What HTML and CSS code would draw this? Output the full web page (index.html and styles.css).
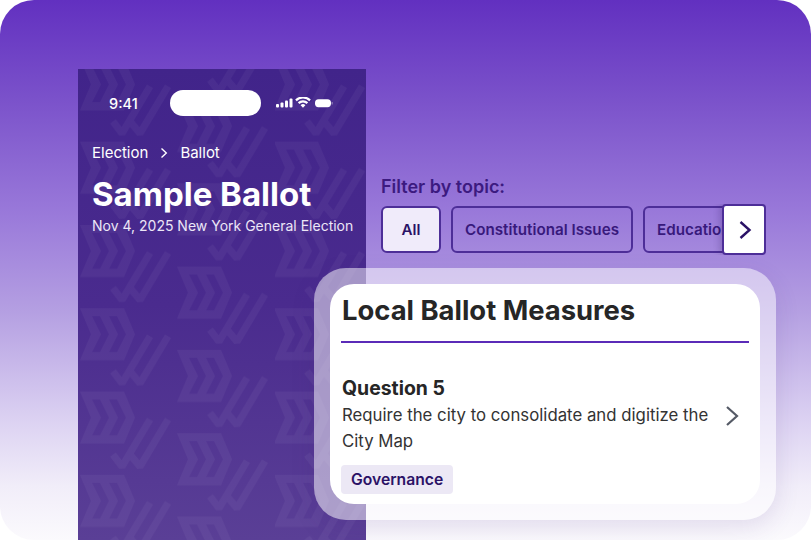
FILE: index.html
```html
<!DOCTYPE html>
<html lang="en">

<head>
    <meta charset="UTF-8">
    <meta name="viewport" content="width=device-width, initial-scale=1.0">
    <title>Sample Ballot</title>
    <link rel="stylesheet" href="styles.css">
</head>

<body>
    <div class="stage">
        <div class="phone">
            <svg class="pattern" width="288" height="471">
                <defs>
                    <g id="mark" class="mark">
                        <path fill-rule="evenodd" d="M0 0H44L55 26L44 52H0L11 26ZM12 8L21 26L12 44H20L29 26L20 8ZM29 8L38 26L29 44H37L46 26L37 8Z" />
                        <path class="mark-w" d="M33 63L42 75L70 28M50 63L60 75L88 28" />
                    </g>
                    <pattern id="tile" width="194" height="83.3" patternUnits="userSpaceOnUse" x="2" y="31">
                        <use href="#mark" x="97" y="0" />
                        <use href="#mark" x="0" y="41.65" />
                        <use href="#mark" x="0" y="-41.65" />
                    </pattern>
                </defs>
                <rect width="288" height="471" fill="url(#tile)" />
            </svg>
            <div class="status">
                <span class="time">9:41</span>
                <span class="island"></span>
                <svg class="status-icons" width="58" height="12" viewBox="0 0 58 12">
                    <rect x="0" y="7" width="3" height="3.5" rx="1" />
                    <rect x="4.5" y="5.5" width="3" height="5" rx="1" />
                    <rect x="9" y="3.5" width="3" height="7" rx="1" />
                    <rect x="13.5" y="1.5" width="3" height="9" rx="1" />
                    <path d="M27 10.8L24.6 8.2A3.4 3.4 0 0 1 29.4 8.2ZM23.4 7L21.8 5.3A7.4 7.4 0 0 1 32.2 5.3L30.6 7A5 5 0 0 0 23.4 7ZM20.7 4.2L19.2 2.6A11 11 0 0 1 34.8 2.6L33.3 4.2A8.9 8.9 0 0 0 20.7 4.2Z" />
                    <rect x="39" y="2.2" width="16" height="8" rx="3.6" />
                    <rect x="55.6" y="5" width="1" height="2.4" rx="0.5" opacity="0.5" />
                </svg>
            </div>
            <div class="crumbs">
                <span>Election</span>
                <svg width="8" height="12" viewBox="0 0 8 12"><path d="M1.5 1.5L6.3 6L1.5 10.5" /></svg>
                <span>Ballot</span>
            </div>
            <h1>Sample Ballot</h1>
            <p class="sub">Nov 4, 2025 New York General Election</p>
        </div>

        <div class="side">
            <div class="filter">
                <div class="filter-label">Filter by topic:</div>
                <div class="chips">
                    <div class="chip active">All</div>
                    <div class="chip">Constitutional Issues</div>
                    <div class="chip">Education</div>
                    <div class="next">
                        <svg width="14" height="20" viewBox="0 0 14 20"><path d="M2.5 2L11.5 10L2.5 18" /></svg>
                    </div>
                </div>
            </div>

            <div class="glass">
                <div class="card">
                    <h2>Local Ballot Measures</h2>
                    <div class="item">
                        <div class="item-text">
                            <h3>Question 5</h3>
                            <p>Require the city to consolidate and digitize the City Map</p>
                            <span class="tag">Governance</span>
                        </div>
                        <svg class="item-arrow" width="14" height="22" viewBox="0 0 14 22"><path d="M2 2L12 11L2 20" /></svg>
                    </div>
                </div>
            </div>
        </div>
    </div>
</body>

</html>
```

FILE: styles.css
```css
* {
    box-sizing: border-box;
}

html,
body {
    margin: 0;
    background-color: #fff;
}

body {
    width: 811px;
    height: 540px;
    overflow: hidden;
    font-family: "Inter", "Liberation Sans", sans-serif;
}

.stage {
    display: flex;
    align-items: flex-start;
    width: 811px;
    height: 540px;
    padding: 69px 0 0 78px;
    overflow: hidden;
    border-radius: 34px;
    background: linear-gradient(180deg, #6230c0 0%, #7a51ca 18%, #9a7ada 40%, #b5a0e2 58%, #dcd2f2 78%, #f1edf9 90%, #fbfafd 100%);
}

.phone {
    position: relative;
    flex: none;
    width: 288px;
    height: 471px;
    padding: 0 14px;
    color: #fff;
    background: linear-gradient(180deg, #41248a 0%, #4a2b8e 50%, #5a3f96 100%);
}

.pattern {
    position: absolute;
    top: 0;
    left: 0;
}

.mark {
    fill: #fff;
    stroke: #fff;
    stroke-width: 0;
    opacity: 0.045;
}

.mark-w {
    fill: none;
    stroke-width: 7;
    stroke-linejoin: bevel;
}

.status {
    position: relative;
    display: flex;
    align-items: center;
    height: 26px;
    margin-top: 21px;
}

.time {
    width: 78px;
    padding-left: 17px;
    font-size: 14.5px;
    font-weight: 500;
}

.island {
    width: 91px;
    height: 26px;
    border-radius: 13px;
    background-color: #fff;
}

.status-icons {
    margin-left: 15px;
    fill: #fff;
}

.crumbs {
    position: relative;
    display: flex;
    align-items: center;
    gap: 12px;
    margin-top: 27px;
    font-size: 15px;
    line-height: 20px;
}

.crumbs svg {
    fill: none;
    stroke: #fff;
    stroke-width: 1.4;
}

h1 {
    position: relative;
    margin: 12px 0 0;
    font-size: 33px;
    line-height: 38px;
    font-weight: 700;
}

.sub {
    position: relative;
    margin: 3px 0 0;
    font-size: 14px;
    line-height: 20px;
    white-space: nowrap;
    color: #ece6f7;
}

.side {
    position: relative;
    flex: none;
    width: 462px;
    margin-left: -52px;
}

.filter {
    padding: 107px 10px 0 67px;
}

.filter-label {
    font-size: 18px;
    line-height: 22px;
    font-weight: 600;
    color: #3c1a80;
}

.chips {
    position: relative;
    display: flex;
    gap: 10px;
    width: 385px;
    height: 51px;
    margin-top: 6px;
    overflow: hidden;
    padding-top: 2px;
}

.chip {
    flex: none;
    height: 47px;
    padding: 0 12px;
    border: 2px solid #4d2e98;
    border-radius: 6px;
    font-size: 15.2px;
    line-height: 44px;
    font-weight: 600;
    color: #38197c;
}

.chip.active {
    width: 60px;
    padding: 0;
    text-align: center;
    color: #2b1266;
    background-color: #f0ebfa;
}

.next {
    position: absolute;
    top: 0;
    right: 0;
    display: flex;
    align-items: center;
    justify-content: center;
    width: 44px;
    height: 51px;
    border: 2px solid #4d2e98;
    border-radius: 4px;
    background-color: #fff;
    box-shadow: -3px 0 6px rgba(40, 20, 90, 0.2);
}

.next svg {
    margin-left: 2px;
    fill: none;
    stroke: #2b1266;
    stroke-width: 2.4;
}

.glass {
    margin-top: 13px;
    padding: 16px;
    border-radius: 32px;
    background-color: rgba(255, 255, 255, 0.5);
    box-shadow: 0 8px 24px rgba(70, 40, 130, 0.12);
}

.card {
    height: 220px;
    padding: 9px 11px 0;
    border-radius: 24px;
    background-color: #fff;
    color: #262626;
}

h2 {
    height: 50px;
    margin: 0;
    padding-left: 1px;
    border-bottom: 2px solid #5b2bb8;
    font-size: 27.4px;
    line-height: 34px;
    font-weight: 700;
}

.item {
    display: flex;
    align-items: center;
    justify-content: space-between;
    padding-right: 10px;
}

.item-text {
    width: 375px;
}

h3 {
    margin: 0 0 0 1px;
    padding-top: 32px;
    font-size: 19.4px;
    line-height: 26px;
    font-weight: 700;
}

.item-text p {
    margin: 1px 0 0 1px;
    font-size: 16.8px;
    line-height: 26px;
    color: #333;
}

.tag {
    display: inline-block;
    height: 29px;
    margin-top: 11px;
    padding: 0 10px;
    border-radius: 4px;
    font-size: 15.7px;
    line-height: 29px;
    font-weight: 600;
    color: #2b1266;
    background-color: #ece8f5;
}

.item-arrow {
    margin-top: -6px;
    fill: none;
    stroke: #555a66;
    stroke-width: 2.2;
}
```
